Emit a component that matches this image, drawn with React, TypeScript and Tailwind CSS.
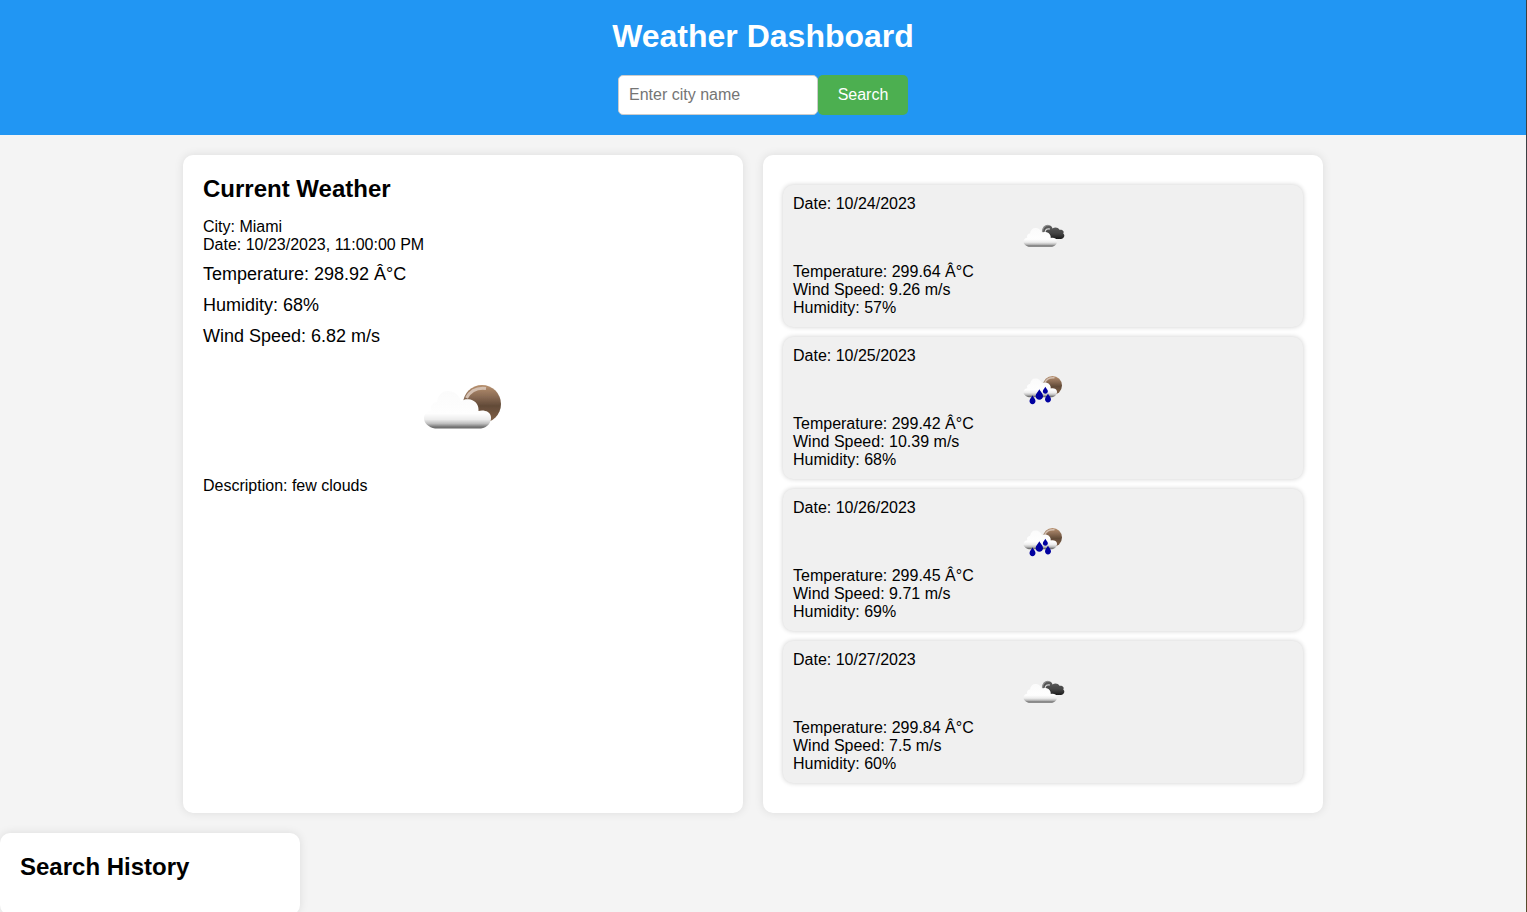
import React from "react";

type IconKind = "few" | "broken" | "rain";

const CLOUD =
  "M22 71.500 C16 70.500 10.500 66 11 60.500 C11.500 56.500 15 54 18.500 53.500 C17 48.500 20 45 24 45 C25 38 29 34 34.500 34 C41 34 46.500 38 48 44.500 C51 42 54 42 57.500 42.500 C63 44 66 48.500 65.500 54 C70 52.500 77.500 54 78 60 C78.500 66 74 70.500 68 71.500 Z";

function Drop({ x, y, w, h }: { x: number; y: number; w: number; h: number }) {
  return (
    <path
      transform={`translate(${x} ${y}) scale(${w} ${h})`}
      d="M0 -0.5 C0.1 -0.3 0.5 -0.08 0.5 0.14 C0.5 0.36 0.27 0.5 0 0.5 C-0.27 0.5 -0.5 0.36 -0.5 0.14 C-0.5 -0.08 -0.1 -0.3 0 -0.5 Z"
    />
  );
}

function WeatherIcon({ kind, size, id }: { kind: IconKind; size: number; id: string }) {
  const cloudShift = kind === "few" ? "translate(0 0)" : kind === "broken" ? "translate(0 -4)" : "translate(0 -7)";
  return (
    <svg width={size} height={size} viewBox="0 0 100 100" className="block" aria-hidden="true">
      <defs>
        <linearGradient id={id + "c"} x1="0" y1="0" x2="0" y2="1">
          <stop offset="0" stopColor="#fbfbfb" />
          <stop offset="0.6" stopColor="#fefefe" />
          <stop offset="0.76" stopColor="#ececec" />
          <stop offset="0.87" stopColor="#bebebe" />
          <stop offset="0.95" stopColor="#7c7c7c" />
          <stop offset="1" stopColor="#666666" />
        </linearGradient>
        <linearGradient id={id + "m"} x1="0" y1="0" x2="0" y2="1">
          <stop offset="0" stopColor="#b8916f" />
          <stop offset="0.3" stopColor="#8b6c55" />
          <stop offset="0.55" stopColor="#624b38" />
          <stop offset="1" stopColor="#856449" />
        </linearGradient>
        <linearGradient id={id + "d"} x1="0" y1="0" x2="0" y2="1">
          <stop offset="0" stopColor="#606060" />
          <stop offset="0.6" stopColor="#434343" />
          <stop offset="1" stopColor="#1c1c1c" />
        </linearGradient>
        <filter id={id + "s"} x="-20%" y="-20%" width="140%" height="140%">
          <feGaussianBlur stdDeviation="0.75" />
        </filter>
      </defs>
      <g filter={`url(#${id}s)`}>
        {kind === "broken" ? (
          <g>
            <path
              d="M49 38 C49 30 54 24.500 61 24.500 C66 24.500 68 28 69 31 C73 28 80 28 83 33.500 C90 33 93 37 90.500 41 C95 44 92 51 86 52 L70 52 C62 50 58 42 49 38 Z"
              fill={`url(#${id}d)`}
            />
            <path d="M49.500 38 C48.500 29 54 24.500 61 25" fill="none" stroke="#8c8c8c" strokeWidth="2.500" />
            <path d="M54 38 C55 33 58 30.500 64 32" fill="none" stroke="#d9d9d9" strokeWidth="2.500" />
          </g>
        ) : (
          <g transform={kind === "rain" ? "translate(0 -6)" : undefined}>
            <circle cx="69" cy="47" r="19" fill={`url(#${id}m)`} />
            <path d="M53.500 41 C57 34.500 64 30.500 73 31.500" fill="none" stroke="#d3bfb0" strokeWidth="3" />
          </g>
        )}
        <path d={CLOUD} transform={cloudShift} fill={`url(#${id}c)`} />
        {kind === "rain" && (
          <g fill="#0000a0">
            <Drop x={29} y={69.5} w={12} h={18} />
            <Drop x={42.7} y={59} w={15} h={21} />
            <Drop x={54.7} y={50.5} w={10} h={14} />
            <Drop x={60} y={66} w={12} h={18} />
          </g>
        )}
      </g>
    </svg>
  );
}

const forecast: { date: string; icon: IconKind; temp: string; wind: string; humidity: string }[] = [
  { date: "10/24/2023", icon: "broken", temp: "299.64", wind: "9.26", humidity: "57" },
  { date: "10/25/2023", icon: "rain", temp: "299.42", wind: "10.39", humidity: "68" },
  { date: "10/26/2023", icon: "rain", temp: "299.45", wind: "9.71", humidity: "69" },
  { date: "10/27/2023", icon: "broken", temp: "299.84", wind: "7.5", humidity: "60" },
];

export default function App() {
  return (
    <div className="flex h-[912px] overflow-hidden bg-[#f4f4f4] font-['Liberation_Sans',Arial,sans-serif] text-base leading-[18px] text-black">
      <div className="flex w-[1526px] shrink-0 flex-col">
        <header className="flex h-[135px] shrink-0 flex-col items-center bg-[#2196f3] pt-[17px]">
          <h1 className="text-[32px] leading-[38px] font-bold text-white">Weather Dashboard</h1>
          <form className="mt-5 flex" onSubmit={(e) => e.preventDefault()}>
            <input
              type="text"
              placeholder="Enter city name"
              className="h-10 w-[200px] rounded-[5px] border border-[#cccccc] bg-white px-2.5 placeholder:text-[#757575]"
            />
            <button className="h-10 w-[90px] rounded-[5px] bg-[#4caf50] text-white">Search</button>
          </form>
        </header>

        <main className="mx-auto mt-5 flex h-[658px] w-[1200px] shrink-0 gap-5 pl-5">
          <section className="w-[560px] rounded-[10px] bg-white p-5 shadow-[0_0_10px_rgba(0,0,0,0.1)]">
            <h2 className="text-2xl leading-[27px] font-bold">Current Weather</h2>
            <p className="mt-4">City: Miami</p>
            <p>Date: 10/23/2023, 11:00:00 PM</p>
            <div className="mt-2.5 flex flex-col gap-2.5 text-lg leading-[21px]">
              <p>Temperature: 298.92 Â°C</p>
              <p>Humidity: 68%</p>
              <p>Wind Speed: 6.82 m/s</p>
            </div>
            <div className="mt-2.5 flex justify-center">
              <WeatherIcon kind="few" size={100} id="now" />
            </div>
            <p className="mt-5">Description: few clouds</p>
          </section>

          <section className="flex w-[560px] flex-col gap-2.5 rounded-[10px] bg-white px-5 py-[30px] shadow-[0_0_10px_rgba(0,0,0,0.1)]">
            {forecast.map((day, i) => (
              <article key={day.date} className="h-[142px] rounded-[10px] bg-[#f0f0f0] p-2.5 shadow-[0_0_5px_rgba(0,0,0,0.2)]">
                <p>Date: {day.date}</p>
                <div className="flex justify-center">
                  <WeatherIcon kind={day.icon} size={50} id={`day${i}`} />
                </div>
                <p>Temperature: {day.temp} Â°C</p>
                <p>Wind Speed: {day.wind} m/s</p>
                <p>Humidity: {day.humidity}%</p>
              </article>
            ))}
          </section>
        </main>

        <aside className="mt-5 h-[82px] w-[300px] shrink-0 rounded-[10px] bg-white p-5 shadow-[0_0_10px_rgba(0,0,0,0.1)]">
          <h2 className="text-2xl leading-[27px] font-bold">Search History</h2>
        </aside>
      </div>
      <div className="w-px shrink-0 bg-linear-to-b from-[#3b3f42] from-60% via-[#3d4a35] via-80% to-[#5a4a2c]" />
    </div>
  );
}
